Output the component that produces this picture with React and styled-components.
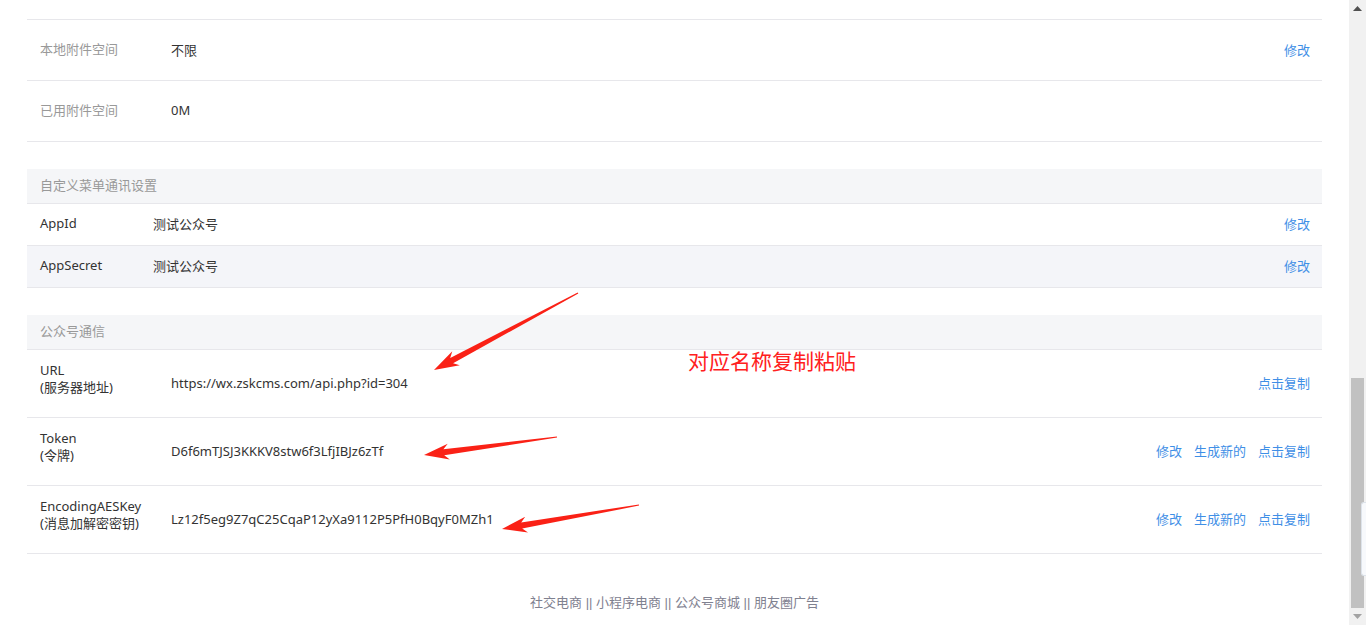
import React from 'react'
import styled, { createGlobalStyle } from 'styled-components'

const GlobalStyle = createGlobalStyle`
  html, body {
    margin: 0;
    padding: 0;
    background: #fff;
    font-family: "Noto Sans", "Noto Sans CJK SC", sans-serif;
    font-size: 13px;
    color: #333;
  }
`

// arrow polygon drawn from the tail to the tip, widening towards the head
function arrowPoints(tail, tip) {
  const dx = tip[0] - tail[0]
  const dy = tip[1] - tail[1]
  const len = Math.hypot(dx, dy)
  const ux = dx / len
  const uy = dy / len
  const nx = -uy
  const ny = ux
  const head = 20
  const neck = [tip[0] - ux * head, tip[1] - uy * head]
  const barb = [tip[0] - ux * (head + 5), tip[1] - uy * (head + 5)]
  const pts = [
    [tail[0] + nx * 0.6, tail[1] + ny * 0.6],
    [neck[0] + nx * 3, neck[1] + ny * 3],
    [barb[0] + nx * 8, barb[1] + ny * 8],
    tip,
    [barb[0] - nx * 8, barb[1] - ny * 8],
    [neck[0] - nx * 3, neck[1] - ny * 3],
    [tail[0] - nx * 0.6, tail[1] - ny * 0.6],
  ]
  return pts.map(p => p.map(v => v.toFixed(1)).join(',')).join(' ')
}

const arrows = [
  { tail: [578, 293], tip: [434, 370] },
  { tail: [557, 437], tip: [424, 455] },
  { tail: [639, 505], tip: [502, 529] },
]

const storage = [
  { label: '本地附件空间', value: '不限', edit: true },
  { label: '已用附件空间', value: '0M' },
]

const menuRows = [
  { label: 'AppId', value: '测试公众号' },
  { label: 'AppSecret', value: '测试公众号', shaded: true },
]

const commRows = [
  { label: 'URL', sub: '(服务器地址)', value: 'https://wx.zskcms.com/api.php?id=304', actions: ['点击复制'] },
  { label: 'Token', sub: '(令牌)', value: 'D6f6mTJSJ3KKKV8stw6f3LfjIBJz6zTf', actions: ['修改', '生成新的', '点击复制'] },
  { label: 'EncodingAESKey', sub: '(消息加解密密钥)', value: 'Lz12f5eg9Z7qC25CqaP12yXa9112P5PfH0BqyF0MZh1', actions: ['修改', '生成新的', '点击复制'] },
]

export default function App() {
  return (
    <Page>
      <GlobalStyle />
      <Main>
        <Table>
          {storage.map(r => (
            <Row key={r.label} height={60}>
              <Label width={131} muted>{r.label}</Label>
              <Value>{r.value}</Value>
              {r.edit && <Actions><Action>修改</Action></Actions>}
            </Row>
          ))}
        </Table>

        <Section>
          <Header>自定义菜单通讯设置</Header>
          {menuRows.map(r => (
            <Row key={r.label} height={41} shaded={r.shaded}>
              <Label width={113}>{r.label}</Label>
              <Value>{r.value}</Value>
              <Actions><Action>修改</Action></Actions>
            </Row>
          ))}
        </Section>

        <Section>
          <Header>公众号通信</Header>
          {commRows.map(r => (
            <Row key={r.label} height={67}>
              <Label width={131} stacked>
                <div>{r.label}</div>
                <div>{r.sub}</div>
              </Label>
              <Value>{r.value}</Value>
              <Actions>
                {r.actions.map(a => <Action key={a}>{a}</Action>)}
              </Actions>
            </Row>
          ))}
        </Section>

        <Footer>社交电商 || 小程序电商 || 公众号商城 || 朋友圈广告</Footer>

        <Annotation>
          <svg width="1349" height="625" viewBox="0 0 1349 625">
            {arrows.map((a, i) => (
              <polygon key={i} points={arrowPoints(a.tail, a.tip)} fill="#fa2116" />
            ))}
          </svg>
          <Note>对应名称复制粘贴</Note>
        </Annotation>
      </Main>

      <Scrollbar>
        <ScrollArrow>
          <svg width="9" height="5" viewBox="0 0 9 5"><path d="M0 5 L4.5 0 L9 5 Z" fill="#505050" /></svg>
        </ScrollArrow>
        <Track>
          <Thumb />
        </Track>
        <ScrollArrow>
          <svg width="9" height="5" viewBox="0 0 9 5"><path d="M0 0 L4.5 5 L9 0 Z" fill="#a3a3a3" /></svg>
        </ScrollArrow>
        <SideTab />
      </Scrollbar>
    </Page>
  )
}

const Page = styled.div`
  display: flex;
  width: 100vw;
  height: 100vh;
  overflow: hidden;
`

const Main = styled.div`
  flex: 1;
  position: relative;
  padding: 19px 27px 0;
  min-width: 0;
`

const Table = styled.div`
  border-top: 1px solid #e7e7eb;
`

const Section = styled.div`
  margin-top: 27px;
`

const Header = styled.div`
  height: 32px;
  line-height: 32px;
  padding: 0 0 2px 13px;
  background: #f5f6f8;
  border-bottom: 1px solid #e7e7eb;
  color: #999;
`

const Row = styled.div`
  display: flex;
  align-items: center;
  box-sizing: border-box;
  height: ${p => p.height + 1}px;
  padding: 0 12px 2px 13px;
  border-bottom: 1px solid #e7e7eb;
  background: ${p => (p.shaded ? '#f4f5f9' : '#fff')};
`

const Label = styled.div`
  width: ${p => p.width}px;
  flex-shrink: 0;
  color: ${p => (p.muted ? '#999' : '#333')};
  line-height: 17px;
  padding-bottom: ${p => (p.stacked ? '7px' : '0')};
`

const Value = styled.div`
  flex: 1;
  color: #333;
  white-space: nowrap;
`

const Actions = styled.div`
  display: flex;
  gap: 12px;
`

const Action = styled.a`
  color: #3f8fe6;
  cursor: pointer;
`

const Footer = styled.div`
  text-align: center;
  padding-top: 39px;
  line-height: 20px;
  color: #7f8190;
  font-family: "Liberation Sans", "Noto Sans CJK SC", sans-serif;
`

const Annotation = styled.div`
  position: absolute;
  inset: 0;
  pointer-events: none;

  svg {
    position: absolute;
    left: 0;
    top: 0;
  }
`

const Note = styled.div`
  position: absolute;
  left: 688px;
  top: 347px;
  font-size: 21px;
  line-height: 28px;
  color: #ff2020;
`

const Scrollbar = styled.div`
  position: relative;
  width: 17px;
  flex-shrink: 0;
  display: flex;
  flex-direction: column;
  background: #f1f1f1;
`

const ScrollArrow = styled.div`
  height: 17px;
  display: flex;
  align-items: center;
  justify-content: center;
`

const Track = styled.div`
  flex: 1;
  display: flex;
  flex-direction: column;
  justify-content: flex-end;
  padding: 0 2px;
`

const Thumb = styled.div`
  height: 230px;
  background: #c1c1c1;
`

const SideTab = styled.div`
  position: absolute;
  right: 0;
  top: 502px;
  width: 4px;
  height: 72px;
  background: #f7f9fc;
  border: 1px solid #dde3ea;
  border-right: none;
  border-radius: 3px 0 0 3px;
`
